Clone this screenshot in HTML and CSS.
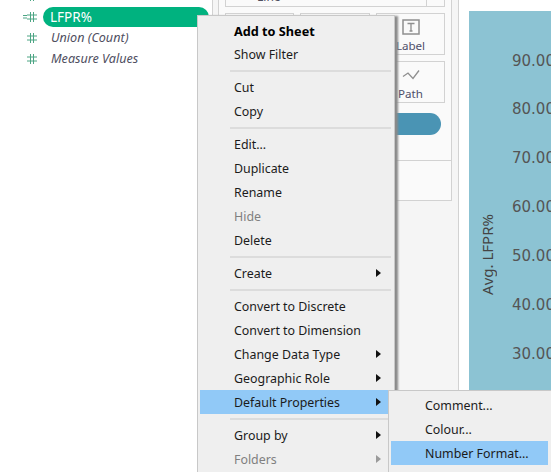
FILE: index.html
```html
<!DOCTYPE html>
<html>
    <head>
        <meta charset="UTF-8">
        <title>LFPR% - Default Properties</title>
        <link rel="stylesheet" href="styles.css">
    </head>
    <body>
        <div class="app">
            <section class="data">
                <div class="field">
                    <svg class="hash" viewBox="0 0 10 10"><path d="M3.500 0v10M6.500 0v10M0 3h10M0 7h10"/></svg>
                </div>
                <div class="field">
                    <svg class="drag" viewBox="0 0 4 4"><path d="M0 .5h4M0 3h4"/></svg>
                    <svg class="hash" viewBox="0 0 10 10"><path d="M3.500 0v10M6.500 0v10M0 3h10M0 7h10"/></svg>
                    <span class="pill">LFPR%</span>
                </div>
                <div class="field">
                    <svg class="hash" viewBox="0 0 10 10"><path d="M3.500 0v10M6.500 0v10M0 3h10M0 7h10"/></svg>
                    <span class="calc">Union (Count)</span>
                </div>
                <div class="field">
                    <svg class="hash" viewBox="0 0 10 10"><path d="M3.500 0v10M6.500 0v10M0 3h10M0 7h10"/></svg>
                    <span class="calc">Measure Values</span>
                </div>
            </section>

            <section class="side">
                <div class="marks">
                    <div class="type-row"><span class="type-name">Line</span><span class="type-end"></span></div>
                    <div class="cards">
                        <div class="card"></div>
                        <div class="card"></div>
                        <div class="card">
                            <svg width="18" height="16" viewBox="0 0 18 16"><rect x="1" y="1" width="16" height="14" fill="none" stroke="#8f8f8f" stroke-width="1.5"/><path d="M5.500 4.500h7M9 4.500v7.500M7.500 12h3" fill="none" stroke="#8f8f8f" stroke-width="1.300"/></svg>
                            <span>Label</span>
                        </div>
                        <div class="card"></div>
                        <div class="card"></div>
                        <div class="card">
                            <svg width="18" height="14" viewBox="0 0 18 14"><path d="M1 7.500L6 4l5 5.500L17 1.500" fill="none" stroke="#8f8f8f" stroke-width="1.300"/></svg>
                            <span>Path</span>
                        </div>
                    </div>
                    <div class="measure-pill"></div>
                    <div class="marks-foot"></div>
                </div>
            </section>

            <div class="gutter"></div>

            <section class="chart">
                <div class="axis-title"><span>Avg. LFPR%</span></div>
                <div class="ticks">
                    <span>90.00</span>
                    <span>80.00</span>
                    <span>70.00</span>
                    <span>60.00</span>
                    <span>50.00</span>
                    <span>40.00</span>
                    <span>30.00</span>
                </div>
            </section>
        </div>

        <div class="menu menu-main">
            <div class="item item-bold">Add to Sheet</div>
            <div class="item">Show Filter</div>
            <div class="sep"></div>
            <div class="item">Cut</div>
            <div class="item">Copy</div>
            <div class="sep"></div>
            <div class="item">Edit...</div>
            <div class="item">Duplicate</div>
            <div class="item">Rename</div>
            <div class="item item-off">Hide</div>
            <div class="item">Delete</div>
            <div class="sep"></div>
            <div class="item item-more">Create</div>
            <div class="sep"></div>
            <div class="item">Convert to Discrete</div>
            <div class="item">Convert to Dimension</div>
            <div class="item item-more">Change Data Type</div>
            <div class="item item-more">Geographic Role</div>
            <div class="item item-more item-on">Default Properties</div>
            <div class="sep"></div>
            <div class="item item-more">Group by</div>
            <div class="item item-more item-off">Folders</div>
        </div>

        <div class="menu menu-sub">
            <div class="item">Comment...</div>
            <div class="item">Colour...</div>
            <div class="item item-on">Number Format...</div>
        </div>
    </body>
</html>
```

FILE: styles.css
```css
html,body{
    margin: 0;
    height: 472px;
    overflow: hidden;
    background: #fff;
    font-family: "Noto Sans", "Liberation Sans", sans-serif;
    font-size: 13px;
}
.app{
    display: flex;
    height: 472px;
    overflow: hidden;
}

/* data pane */
.data{
    width: 212px;
    flex: none;
    margin-top: -15px;
}
.field{
    display: flex;
    align-items: center;
    height: 21px;
    padding-left: 27px;
    color: #4f4f5f;
}
.hash{
    width: 10px;
    height: 10px;
    flex: none;
    fill: none;
    stroke: #4ca584;
    stroke-width: 1;
}
.drag{
    width: 4px;
    height: 4px;
    margin-left: -4px;
    flex: none;
    fill: none;
    stroke: #4ca584;
    stroke-width: 1;
}
.pill{
    flex: none;
    box-sizing: border-box;
    width: 166px;
    height: 20px;
    line-height: 20px;
    margin-left: 6px;
    padding-left: 7px;
    border-radius: 10px;
    background: #00b27f;
    color: #fff;
    font-size: 13.500px;
}
.calc{
    margin-left: 14px;
    font-style: italic;
    font-size: 12.600px;
}

/* shelf pane */
.side{
    width: 247px;
    flex: none;
    box-sizing: border-box;
    background: #f5f5f5;
    border-left: 1px solid #d2d2d2;
    border-right: 1px solid #d2d2d2;
}
.marks{
    box-sizing: border-box;
    width: 234px;
    height: 221px;
    margin: -20px 0 0 5px;
    padding: 0 6px;
    background: #fafafa;
    border: 1px solid #d2d2d2;
}
.type-row{
    display: flex;
    justify-content: space-between;
    box-sizing: border-box;
    height: 26px;
    padding: 7px 0 0 31px;
    border: 1px solid #d2d2d2;
    border-top: 0;
    color: #4f4f5f;
    font-size: 12px;
}
.type-end{
    width: 17px;
    border-left: 1px solid #d2d2d2;
}
.cards{
    display: grid;
    grid-template-columns: 69px 70px 69px;
    grid-auto-rows: 42px;
    gap: 6px;
    margin-top: 6px;
}
.card{
    display: flex;
    flex-direction: column;
    align-items: center;
    justify-content: flex-end;
    box-sizing: border-box;
    border: 1px solid #d2d2d2;
    color: #4f4f6a;
    font-size: 11.600px;
    line-height: 16px;
}
.card svg{
    margin-bottom: 3px;
}
.measure-pill{
    height: 22px;
    width: 216px;
    margin-top: 10px;
    border-radius: 0 11px 11px 0;
    background: #4a94b4;
}
.marks-foot{
    margin: 25px -6px 0;
    border-bottom: 1px solid #d2d2d2;
}
.gutter{
    width: 10px;
    flex: none;
}

/* chart */
.chart{
    flex: 1;
    display: flex;
    margin-top: 11px;
    background: #8cc3d3;
    color: #555;
    font-family: "DejaVu Sans", sans-serif;
    white-space: nowrap;
    min-width: 0;
    overflow: hidden;
}
.axis-title{
    width: 43px;
    flex: none;
    display: flex;
    align-items: center;
    justify-content: center;
    height: 486px;
    color: #444;
    font-family: "Noto Sans", sans-serif;
    font-size: 15px;
}
.axis-title span{
    writing-mode: vertical-rl;
    transform: rotate(180deg);
    margin-left: -8px;
}
.ticks{
    display: flex;
    flex-direction: column;
    gap: 28.900px;
    padding-top: 39.500px;
    font-size: 15px;
    line-height: 20px;
}

/* context menus */
.menu{
    position: absolute;
    box-sizing: border-box;
    background: #efefef;
    border: 1px solid #c8c8c8;
    padding: 2px;
    color: #1b1b1b;
    font-size: 12.400px;
}
.menu-main{
    left: 197px;
    top: 15px;
    width: 198px;
    height: 480px;
    box-shadow: 3px 1px 2px #8a8a8a;
}
.menu-sub{
    left: 388px;
    top: 390px;
    width: 166px;
    height: 100px;
}
.item{
    position: relative;
    height: 24px;
    line-height: 26px;
    padding-left: 34px;
    white-space: nowrap;
}
.menu-sub .item{
    width: 123px;
}
.item-bold{
    font-weight: 700;
    font-size: 12.700px;
    color: #000;
}
.item-off{
    color: #808080;
}
.item-on{
    background: #91c9f7;
}
.item-more::after{
    content: "";
    position: absolute;
    left: 176px;
    top: 8px;
    border-left: 5px solid #111;
    border-top: 4px solid transparent;
    border-bottom: 4px solid transparent;
}
.item-more.item-off::after{
    border-left-color: #9a9a9a;
}
.sep{
    height: 2px;
    margin: 4px 1px 3px 30px;
    background: #dcdcdc;
}
```
